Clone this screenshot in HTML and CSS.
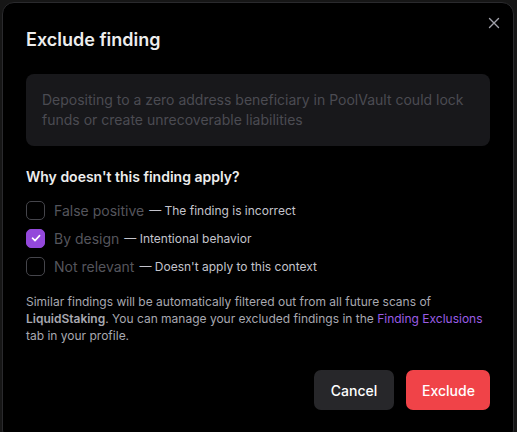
FILE: index.html
```html
<!DOCTYPE html>
<html>
<head>
<meta charset="utf-8">
<link rel="stylesheet" href="styles.css">
</head>
<body>
<div class="dialog">
  <button class="close" aria-label="Close">
    <svg width="12" height="12" viewBox="0 0 12 12"><path d="M1.5 1.5 L10.5 10.5 M10.5 1.5 L1.5 10.5" stroke="#a1a1aa" stroke-width="1.4" stroke-linecap="round"/></svg>
  </button>
  <h2 class="title">Exclude finding</h2>
  <div class="finding">Depositing to a zero address beneficiary in PoolVault could lock funds or create unrecoverable liabilities</div>
  <h3 class="question">Why doesn't this finding apply?</h3>
  <div class="options">
    <label class="option"><span class="box"></span><span class="name">False positive</span><span class="desc">— The finding is incorrect</span></label>
    <label class="option"><span class="box checked"><svg width="12" height="12" viewBox="0 0 12 12"><path d="M2.5 6.2 L5 8.6 L9.6 3.6" fill="none" stroke="#fff" stroke-width="1.6" stroke-linecap="round" stroke-linejoin="round"/></svg></span><span class="name">By design</span><span class="desc">— Intentional behavior</span></label>
    <label class="option"><span class="box"></span><span class="name">Not relevant</span><span class="desc">— Doesn't apply to this context</span></label>
  </div>
  <p class="note">Similar findings will be automatically filtered out from all future scans of <strong>LiquidStaking</strong>. You can manage your excluded findings in the <a href="#">Finding Exclusions</a> tab in your profile.</p>
  <div class="actions">
    <button class="btn cancel">Cancel</button>
    <button class="btn exclude">Exclude</button>
  </div>
</div>
</body>
</html>
```
FILE: styles.css
```css
* { box-sizing: border-box; }
html, body { margin: 0; padding: 0; }
body {
  background: #161616;
  font-family: Inter, "Noto Sans", sans-serif;
  width: 517px;
  height: 432px;
  overflow: hidden;
  padding: 2px 3px 0 2px;
}
.dialog {
  position: relative;
  background: #000;
  border: 1px solid #2a2a2d;
  border-radius: 12px;
  height: 440px;
  padding: 23px 23px 0 23px;
  display: flex;
  flex-direction: column;
}
.close {
  position: absolute;
  top: 12px;
  right: 11px;
  background: none;
  border: 0;
  padding: 0;
  width: 16px;
  height: 16px;
  display: flex;
  align-items: center;
  justify-content: center;
}
.title {
  margin: 0;
  font-size: 18px;
  line-height: 28px;
  font-weight: 600;
  color: #ededed;
}
.finding {
  margin-top: 20px;
  background: #18181b;
  border-radius: 8px;
  padding: 16px;
  font-size: 14px;
  line-height: 20px;
  color: #4b4b52;
}
.question {
  margin: 20px 0 9px;
  font-size: 14px;
  line-height: 21px;
  font-weight: 600;
  color: #ededed;
}
.options { display: flex; flex-direction: column; }
.option {
  display: flex;
  align-items: center;
  height: 28px;
  white-space: nowrap;
}
.box {
  width: 19px;
  height: 19px;
  border: 1.5px solid #45454b;
  border-radius: 5px;
  margin-right: 9px;
  display: flex;
  align-items: center;
  justify-content: center;
  flex: none;
}
.box.checked { background: #9348db; border-color: #9348db; }
.name { font-size: 14px; color: #55555c; }
.desc { font-size: 12px; color: #c4c4cc; margin-left: 5px; }
.note {
  margin: 13px 0 0;
  font-size: 12px;
  line-height: 17px;
  color: #a8a8b0;
}
.note strong { font-weight: 600; color: #a8a8b0; }
.note a { color: #9b5de5; text-decoration: none; }
.actions {
  margin-top: 26px;
  display: flex;
  justify-content: flex-end;
  gap: 12px;
}
.btn {
  height: 40px;
  border: 0;
  border-radius: 7px;
  font-family: inherit;
  font-size: 14px;
  font-weight: 500;
  color: #fff;
  padding: 0 16px;
}
.cancel { background: #27272a; width: 80px; }
.exclude { background: #f04348; width: 84px; }
```
